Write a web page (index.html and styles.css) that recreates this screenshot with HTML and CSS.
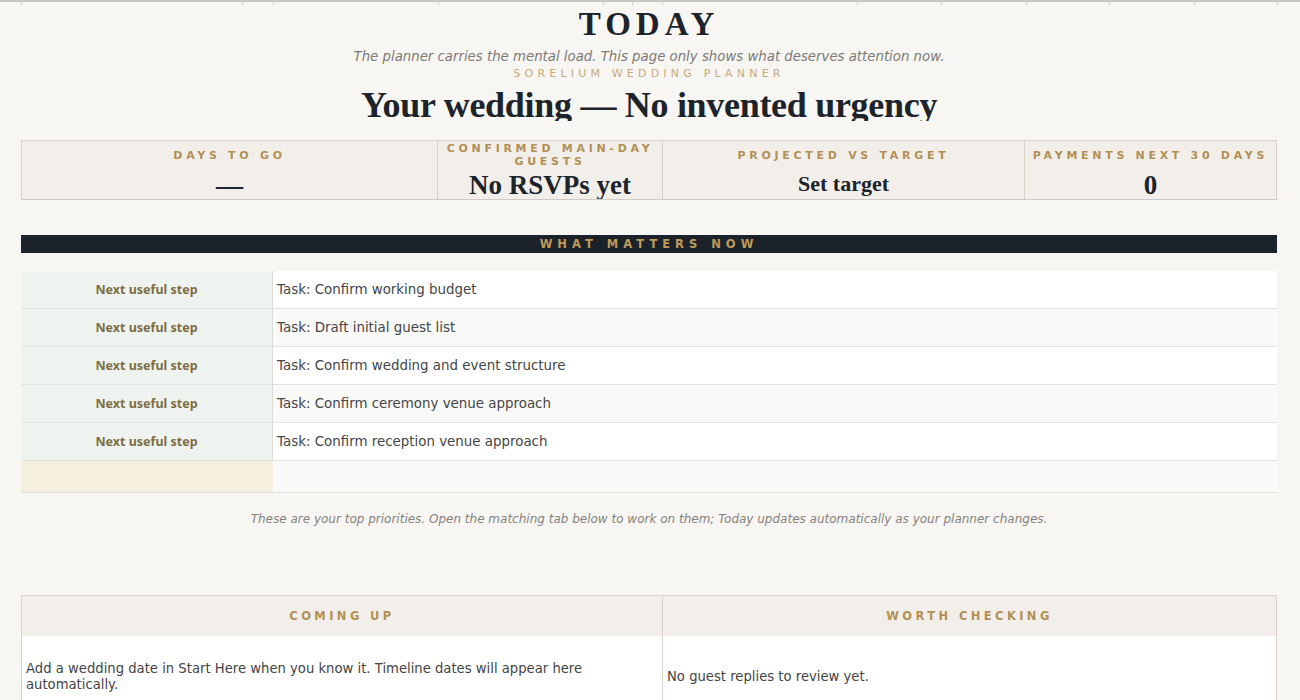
FILE: index.html
```html
<!DOCTYPE html>
<html lang="en">
<head>
  <meta charset="UTF-8">
  <title>Today - Sorelium Wedding Planner</title>
  <link rel="stylesheet" href="styles.css">
</head>
<body>

  <div class="gridtop">
    <span></span><span></span><span></span><span></span><span></span><span></span><span></span>
    <span></span><span></span><span></span><span></span><span></span><span></span><span></span>
  </div>

  <main class="sheet">
    <h1 class="today">TODAY</h1>
    <p class="lede">The planner carries the mental load. This page only shows what deserves attention now.</p>
    <p class="brand">SORELIUM WEDDING PLANNER</p>
    <div class="headline"><h2>Your wedding — No invented urgency</h2></div>

    <div class="kpis">
      <div class="kpi">
        <div class="kpi-label">DAYS TO GO</div>
        <div class="kpi-value">—</div>
      </div>
      <div class="kpi">
        <div class="kpi-label">CONFIRMED MAIN-DAY GUESTS</div>
        <div class="kpi-value">No RSVPs yet</div>
      </div>
      <div class="kpi">
        <div class="kpi-label">PROJECTED VS TARGET</div>
        <div class="kpi-value kpi-small">Set target</div>
      </div>
      <div class="kpi">
        <div class="kpi-label">PAYMENTS NEXT 30 DAYS</div>
        <div class="kpi-value">0</div>
      </div>
    </div>

    <div class="band">WHAT MATTERS NOW</div>

    <div class="steps">
      <div class="step">
        <div class="step-kind">Next useful step</div>
        <div class="step-task">Task: Confirm working budget</div>
      </div>
      <div class="step">
        <div class="step-kind">Next useful step</div>
        <div class="step-task">Task: Draft initial guest list</div>
      </div>
      <div class="step">
        <div class="step-kind">Next useful step</div>
        <div class="step-task">Task: Confirm wedding and event structure</div>
      </div>
      <div class="step">
        <div class="step-kind">Next useful step</div>
        <div class="step-task">Task: Confirm ceremony venue approach</div>
      </div>
      <div class="step">
        <div class="step-kind">Next useful step</div>
        <div class="step-task">Task: Confirm reception venue approach</div>
      </div>
      <div class="step step-empty">
        <div class="step-kind"></div>
        <div class="step-task"></div>
      </div>
    </div>

    <p class="note">These are your top priorities. Open the matching tab below to work on them; Today updates automatically as your planner changes.</p>

    <div class="panels">
      <div class="panel-head">COMING UP</div>
      <div class="panel-head">WORTH CHECKING</div>
      <div class="panel-body">Add a wedding date in Start Here when you know it. Timeline dates will appear here automatically.</div>
      <div class="panel-body">No guest replies to review yet.</div>
    </div>
  </main>

</body>
</html>
```

FILE: styles.css
```css
body {
  margin: 0;
  background-color: #f8f6f2;
  font-family: "DejaVu Sans", "Open Sans", sans-serif;
  color: #444;
  overflow: hidden;
}

/* faint sheet column marks at the very top */
.gridtop {
  display: grid;
  grid-template-columns: 21px 221px 31px 165px 165px 29px 30px 195px 84px 85px 83px 85px 83px 1fr;
  height: 5px;
  border-top: 2px solid #c9c5bf;
}

.gridtop span {
  border-left: 1px solid #d4d0ca;
  height: 3px;
}

.gridtop span:first-child {
  border-left: none;
}

.sheet {
  width: 1256px;
  margin-left: 21px;
}

.today {
  margin: 0;
  height: 40px;
  line-height: 40px;
  text-align: center;
  font-family: "Liberation Serif", serif;
  font-size: 33px;
  font-weight: bold;
  letter-spacing: 5px;
  color: #1c232b;
  margin-top: -3px;
}

.lede {
  margin: 0;
  line-height: 16px;
  text-align: center;
  font-size: 13.3px;
  font-style: italic;
  color: #7c7a77;
  margin-top: 5px;
}

.brand {
  margin: 1px 0 0;
  line-height: 16px;
  text-align: center;
  font-size: 11px;
  letter-spacing: 4.2px;
  color: #c8aa7c;
}

.headline {
  height: 36px;
  margin-top: 3px;
  overflow: hidden;
}

.headline h2 {
  margin: 0;
  line-height: 40px;
  text-align: center;
  font-family: "Liberation Serif", serif;
  font-size: 36px;
  font-weight: bold;
  color: #1c232b;
  letter-spacing: -0.3px;
}

.kpis {
  display: grid;
  grid-template-columns: 415px 225px 362px 1fr;
  margin-top: 19px;
  height: 60px;
  border: 1px solid #d9d2c9;
  border-bottom-color: #cfcac3;
  box-sizing: border-box;
  background: #f2efea;
}

.kpi {
  border-left: 1px solid #d9d2c9;
  overflow: hidden;
  text-align: center;
}

.kpi:first-child {
  border-left: none;
}

.kpi-label {
  height: 28px;
  display: flex;
  align-items: center;
  justify-content: center;
  font-size: 11px;
  font-weight: bold;
  line-height: 13px;
  letter-spacing: 3.7px;
  color: #b38f55;
  padding: 0 4px;
}

.kpi-value {
  line-height: 33px;
  font-family: "Liberation Serif", serif;
  font-size: 27px;
  font-weight: bold;
  color: #1c232b;
}

.kpi-small {
  font-size: 22px;
  line-height: 30px;
}

.band {
  margin-top: 35px;
  height: 18px;
  line-height: 18px;
  background: #1c222a;
  color: #c09a5b;
  text-align: center;
  font-size: 11.5px;
  font-weight: bold;
  letter-spacing: 5px;
}

.steps {
  margin-top: 18px;
}

.step {
  display: grid;
  grid-template-columns: 252px 1fr;
  height: 38px;
  border-bottom: 1px solid #e2e2e0;
  box-sizing: border-box;
}

.step-kind {
  background: #eef3f0;
  border-right: 1px solid #dcdcd8;
  display: flex;
  align-items: center;
  justify-content: center;
  font-family: "Noto Sans", "Open Sans", sans-serif;
  font-size: 12.5px;
  font-weight: bold;
  color: #7d6d45;
}

.step-task {
  background: #fff;
  display: flex;
  align-items: center;
  padding-left: 4px;
  font-size: 13.4px;
  color: #454545;
}

.step:nth-child(even) .step-task {
  background: #f9f9f8;
}

.step-empty {
  height: 32px;
}

.step-empty .step-kind {
  background: #f5efe0;
  border-right: none;
}

.step-empty .step-task {
  background: #f9f9f8;
}

.note {
  margin: 18px 0 0;
  line-height: 16px;
  text-align: center;
  font-size: 12px;
  font-style: italic;
  color: #858380;
}

.panels {
  display: grid;
  grid-template-columns: 640px 1fr;
  margin-top: 68px;
  border: 1px solid #d9d2c9;
}

.panel-head {
  height: 40px;
  line-height: 40px;
  background: #f2efea;
  text-align: center;
  font-size: 11.5px;
  font-weight: bold;
  letter-spacing: 3.4px;
  color: #b38f55;
}

.panel-head + .panel-head,
.panel-body + .panel-body {
  border-left: 1px solid #d9d2c9;
}

.panel-body {
  height: 82px;
  display: flex;
  align-items: center;
  background: #fff;
  padding-left: 4px;
  padding-right: 50px;
  font-size: 13.2px;
  line-height: 16px;
  color: #444;
}
```
